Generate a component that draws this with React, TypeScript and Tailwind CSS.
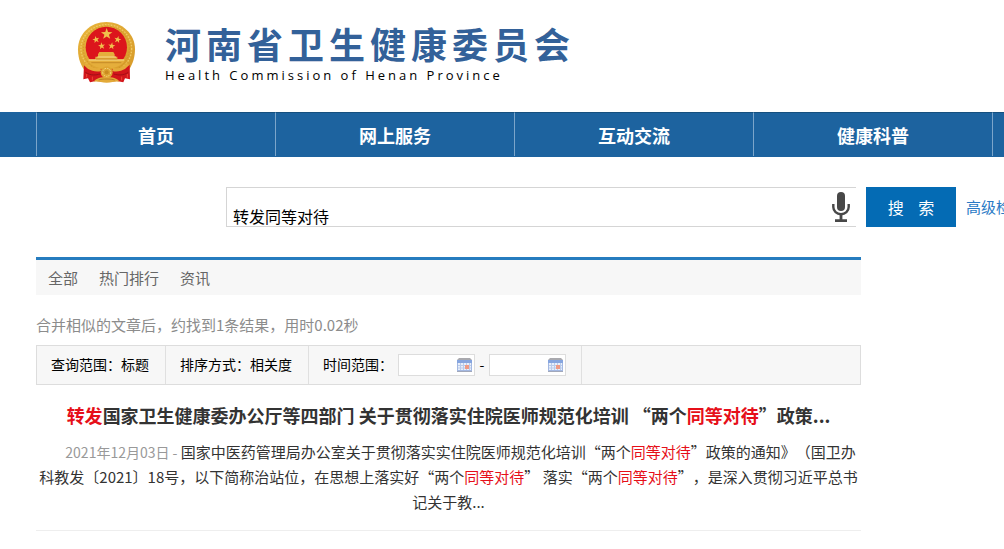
import { useState } from "react";

const navItems = ["首页", "网上服务", "互动交流", "健康科普"];
const tabs = ["全部", "热门排行", "资讯"];

function star(cx: number, cy: number, r: number, turn = 0) {
  return Array.from({ length: 10 }, (_, i) => {
    const a = ((i * 36 - 90 + turn) * Math.PI) / 180;
    const d = i % 2 ? r * 0.4 : r;
    return `${(cx + d * Math.cos(a)).toFixed(1)},${(cy + d * Math.sin(a)).toFixed(1)}`;
  }).join(" ");
}

function Emblem() {
  return (
    <svg viewBox="0 0 198 204" className="w-[66px] h-[68px] shrink-0" role="img" aria-label="国徽">
      <defs>
        <linearGradient id="gold" x1="0" y1="0" x2="1" y2="1">
          <stop offset="0" stopColor="#e9b53c" />
          <stop offset="0.5" stopColor="#dfa733" />
          <stop offset="1" stopColor="#d79a29" />
        </linearGradient>
      </defs>
      <path d="M97 12C145 12 183 48 183 94C183 125 172 145 162 160H34C22 145 12 125 12 94C12 48 49 12 97 12Z" fill="url(#gold)" />
      <ellipse cx="97" cy="92" rx="76" ry="72" fill="none" stroke="#f0c964" strokeWidth="4" strokeDasharray="5 4" />
      <ellipse cx="97" cy="92" rx="69" ry="68" fill="none" stroke="#c58a22" strokeWidth="2" strokeDasharray="4 5" />
      <ellipse cx="97" cy="88" rx="62" ry="62" fill="#dc151c" />
      <polygon points={star(98, 48, 18)} fill="#f0c14c" />
      <polygon points={star(66, 65, 11, -12)} fill="#f0c14c" />
      <polygon points={star(131, 65, 11, 12)} fill="#f0c14c" />
      <polygon points={star(83, 84, 11, -8)} fill="#f0c14c" />
      <polygon points={star(113, 84, 11, 8)} fill="#f0c14c" />
      <path d="M76 102H118L122 109V116H130V124H154C149 138 134 147 116 150H78C60 147 46 137 40 124H64V116H72V109Z" fill="#e5ae3b" />
      <path d="M70 117H126M44 126H150" stroke="#f7dd8e" strokeWidth="3" />
      <path d="M66 123H130M52 134H142" stroke="#b97a1c" strokeWidth="2" />
      <path d="M30 140L28 184L42 181L48 193L66 189L97 192L128 189L148 193L153 181L168 184L167 140L130 154H66Z" fill="#d2151b" />
      <path d="M33 138C46 154 66 158 80 154M162 138C149 154 130 158 116 154" fill="none" stroke="#e4ab39" strokeWidth="10" />
      <path d="M34 163C52 174 66 171 78 168M119 168C132 172 149 173 163 163" fill="none" stroke="#a30f15" strokeWidth="3" />
      <path d="M55 176V187M143 176V187M160 168V179M38 168V178" fill="none" stroke="#ef4434" strokeWidth="3" />
      <circle cx="98" cy="163" r="18" fill="#dfa431" />
      <circle cx="98" cy="163" r="12" fill="none" stroke="#f8da85" strokeWidth="3" strokeDasharray="5 3" />
      <circle cx="98" cy="163" r="6" fill="#c98a20" />
      <path d="M58 192C66 180 82 177 98 177S130 180 138 192C126 188 116 194 98 194S70 188 58 192Z" fill="#e3aa38" />
      <path d="M74 186C84 182 112 182 122 186" fill="none" stroke="#a66317" strokeWidth="2" />
    </svg>
  );
}

function MicIcon() {
  return (
    <svg viewBox="0 0 18 30" className="w-[18px] h-[30px]" aria-hidden="true">
      <rect x="5" y="0" width="8" height="19" rx="4" fill="#484848" />
      <path d="M1.3 12V15A7.7 7.2 0 0 0 16.7 15V12" fill="none" stroke="#484848" strokeWidth="2.4" />
      <path d="M9 22V28M3 28.6H15" fill="none" stroke="#484848" strokeWidth="2.8" />
    </svg>
  );
}

function CalendarIcon() {
  return (
    <svg viewBox="0 0 15 14" className="w-[15px] h-[14px]" aria-hidden="true">
      <path d="M2 0H13L15 2V4H0V2Z" fill="#a9a9ae" />
      <rect x="0" y="2" width="15" height="12" fill="#a3b8e2" />
      <rect x="0" y="2" width="15" height="3" fill="#86a5df" />
      <rect x="1" y="5" width="13" height="7" fill="#e8effb" />
      <path d="M3.5 5V12M6.5 5V12M9.5 5V12M12.5 5V12M1 7.5H14M1 10H14" stroke="#b9cbeb" strokeWidth="1" />
      <rect x="8" y="7" width="4" height="4" fill="#ee9a86" />
      <path d="M0 13.5H15" stroke="#a2a8ba" />
    </svg>
  );
}

function DateField({ label }: { label: string }) {
  return (
    <span className="flex items-center w-[77px] h-[22px] mt-2 pr-0.5 border border-[#ddd] bg-white">
      <input aria-label={label} className="min-w-0 flex-1 h-full px-1 text-xs outline-none" />
      <CalendarIcon />
    </span>
  );
}

function Hit({ children }: { children: string }) {
  return <em className="not-italic text-[#e60f19]">{children}</em>;
}

export default function App() {
  const [keyword, setKeyword] = useState("转发同等对待");

  return (
    <div className="min-h-screen overflow-hidden bg-white font-['Noto_Sans_CJK_SC','Open_Sans',sans-serif] text-[#333] [text-spacing-trim:space-all]">
      <header className="flex h-28 pl-[74px] pt-[18px]">
        <Emblem />
        <div className="pl-[25px] pt-0.5 whitespace-nowrap">
          <h1 className="text-4xl leading-[46px] font-bold tracking-[5px] text-[#336199]">河南省卫生健康委员会</h1>
          <p className="font-['Open_Sans',sans-serif] text-[13px] leading-[18px] tracking-[3px] text-black">Health Commission of Henan Province</p>
        </div>
      </header>

      <nav className="flex h-[45px] pl-9 bg-[#1d639f]">
        {navItems.map((item) => (
          <a key={item} href="#" className="w-[239px] h-11 shrink-0 border-l border-l-[#7ba5ca] border-t border-t-[#15507f] text-center text-lg leading-11 font-bold text-white">
            {item}
          </a>
        ))}
        <span className="h-11 flex-1 border-l border-l-[#7ba5ca] border-t border-t-[#15507f]" />
      </nav>

      <form onSubmit={(e) => e.preventDefault()} className="flex mt-[30px] pl-[226px] h-10 whitespace-nowrap">
        <div className="flex w-[630px] shrink-0 border-y border-l border-[#d5d5d5]">
          <input
            aria-label="搜索关键词"
            value={keyword}
            onChange={(e) => setKeyword(e.target.value)}
            className="min-w-0 flex-1 pl-1.5 pt-[18px] text-base leading-5 text-black outline-none"
          />
          <button type="button" aria-label="语音搜索" className="pr-1.5"><MicIcon /></button>
        </div>
        <button type="submit" className="w-[90px] shrink-0 ml-2.5 bg-[#046bb4] text-base text-white whitespace-pre">搜    索</button>
        <a href="#" className="pl-2.5 text-[15px] leading-10 text-[#2a7ac5]">高级检索</a>
      </form>

      <main className="ml-9 max-w-[825px] mt-[30px]">
        <div className="flex gap-[21px] h-[38px] pl-3 border-t-3 border-[#267cbf] bg-[#f7f7f7] text-[15px] leading-9 text-[#666]">
          {tabs.map((tab) => <a key={tab} href="#">{tab}</a>)}
        </div>

        <p className="mt-5 mb-[10px] text-[15px] leading-5 text-[#8c8c8c]">合并相似的文章后，约找到1条结果，用时0.02秒</p>

        <div className="flex h-10 border border-[#ddd] bg-[#f7f7f7] text-sm leading-9 text-black">
          <span className="pl-[14px] pr-4 border-r border-[#e0e0e0]">查询范围：标题</span>
          <span className="pl-[14px] pr-4 border-r border-[#e0e0e0]">排序方式：相关度</span>
          <div className="flex items-start pl-[14px] pr-[15px] border-r border-[#e0e0e0]">
            <span className="pr-[5px]">时间范围：</span>
            <DateField label="开始日期" />
            <span className="w-[14px] text-center">-</span>
            <DateField label="结束日期" />
          </div>
        </div>

        <article className="pt-4 pb-4 border-b border-[#eee] text-center whitespace-nowrap">
          <h2 className="text-lg leading-7 font-bold">
            <a href="#">
              <Hit>转发</Hit>国家卫生健康委办公厅等四部门 关于贯彻落实住院医师规范化培训 “两个<Hit>同等对待</Hit>”政策...
            </a>
          </h2>
          <p className="mt-[10px] text-[15px] leading-[25px]">
            <span className="pl-6 text-sm text-[#999]">2021年12月03日 - </span>
            国家中医药管理局办公室关于贯彻落实实住院医师规范化培训“两个<Hit>同等对待</Hit>”政策的通知》（国卫办
            <br />
            科教发〔2021〕18号，以下简称治站位，在思想上落实好“两个<Hit>同等对待</Hit>” 落实“两个<Hit>同等对待</Hit>”，是深入贯彻习近平总书
            <br />
            记关于教...
          </p>
        </article>
      </main>
    </div>
  );
}
